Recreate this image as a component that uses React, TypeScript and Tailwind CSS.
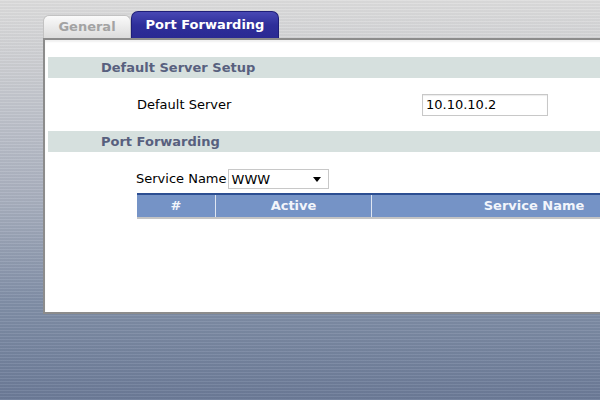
const font = "font-['DejaVu_Sans','Verdana',sans-serif]";

const SectionBar = ({ title }: { title: string }) => (
  <div className="h-[21px] flex items-center bg-[#d6e0de] pl-[53px]">
    <span className="text-[13px] font-bold text-[#58607e] leading-none">{title}</span>
  </div>
);

export default function App() {
  return (
    <div
      className={`${font} w-[600px] h-[400px] overflow-hidden bg-[repeating-linear-gradient(0deg,rgba(255,255,255,0.07)_0px,rgba(255,255,255,0.07)_1px,rgba(0,0,0,0.03)_1px,rgba(0,0,0,0.03)_3px),linear-gradient(180deg,#dedede_0%,#d2d3d6_12%,#a9b0bf_50%,#8290a8_75%,#6c7b98_100%)] pt-[11px] pl-[43px]`}
    >
      {/* tabs */}
      <div className="flex items-end h-[27px]">
        <div className="h-[23px] w-[88px] flex items-center justify-center rounded-t-[6px] border border-b-0 border-[#c2c2c2] bg-gradient-to-b from-[#fafafa] to-[#dcdcdc]">
          <span className="text-[13px] font-bold text-[#a3a3a3]">General</span>
        </div>
        <div className="h-[27px] w-[148px] flex items-center justify-center rounded-t-[7px] border border-b-0 border-[#1e1e78] bg-gradient-to-b from-[#4848b4] via-[#2e2e9a] to-[#2a2a92]">
          <span className="text-[13px] font-bold text-white">Port Forwarding</span>
        </div>
      </div>

      {/* panel */}
      <div className="w-[600px] h-[276px] overflow-hidden bg-white border-t-2 border-l-2 border-b-2 border-[#8c8c8c] pl-[3px] pt-[17px] shadow-[inset_0_2px_2px_rgba(0,0,0,0.06)]">
        <SectionBar title="Default Server Setup" />
        <div className="h-[53px] flex items-center">
          <span className="ml-[89px] w-[285px] text-[13px] text-black">Default Server</span>
          <div className="h-[22px] w-[126px] border border-[#c8c8c8] flex items-center px-[3px] shadow-[inset_0_1px_1px_rgba(0,0,0,0.08)]">
            <span className="text-[13px] text-black">10.10.10.2</span>
          </div>
        </div>

        <SectionBar title="Port Forwarding" />
        <div className="pl-[88px] pt-[17px]">
          <div className="flex items-center h-[20px]">
            <span className="text-[13px] text-black mr-[1px]">Service Name</span>
            <div className="h-[20px] w-[101px] border border-[#c8c8c8] flex items-center justify-between pl-[3px] pr-[7px]">
              <span className="text-[13px] text-black leading-none">WWW</span>
              <span className="w-0 h-0 border-l-[4px] border-r-[4px] border-t-[5px] border-l-transparent border-r-transparent border-t-black" />
            </div>
          </div>
          <div className="mt-[4px] ml-[1px] flex w-max h-[24px] border-t-2 border-[#2c4e92] bg-[#7593c6] shadow-[0_2px_0_#c4c4c4]">
            <div className="w-[79px] shrink-0 flex items-center justify-center border-r border-[#dfe6f2]">
              <span className="text-[13px] font-bold text-[#f2f5fb]">#</span>
            </div>
            <div className="w-[156px] shrink-0 flex items-center justify-center border-r border-[#dfe6f2]">
              <span className="text-[13px] font-bold text-[#f2f5fb]">Active</span>
            </div>
            <div className="w-[324px] shrink-0 flex items-center justify-center">
              <span className="text-[13px] font-bold text-[#f2f5fb]">Service Name</span>
            </div>
          </div>
        </div>
      </div>
    </div>
  );
}
